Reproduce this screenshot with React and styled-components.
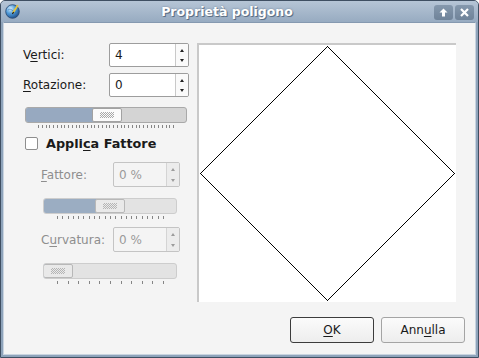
import React from 'react';
import styled, { createGlobalStyle } from 'styled-components';

const Global = createGlobalStyle`
  html, body { margin: 0; padding: 0; background: #ffffff; }
  body { font-family: "DejaVu Sans", "Bitstream Vera Sans", sans-serif; font-size: 12px; color: #1a1a1a; }
  * { box-sizing: border-box; }
`;

const Window = styled.div`
  width: 479px;
  height: 358px;
  display: flex;
  flex-direction: column;
  background: #8ea3ba;
  border: 1px solid #3f4f62;
  border-radius: 5px 5px 0 0;
  overflow: hidden;
`;

const TitleBar = styled.div`
  height: 21px;
  flex: none;
  display: flex;
  align-items: center;
  padding: 0 4px 0 4px;
  background: linear-gradient(#b6c5d6, #97abc1);
`;

const TitleText = styled.div`
  flex: 1;
  text-align: center;
  font-weight: bold;
  font-size: 12.5px;
  color: #ffffff;
  text-shadow: 1px 1px 0 #5d6f84, 0 0 2px #6a7d93;
`;

const TitleButtons = styled.div`
  display: flex;
  gap: 2px;
  padding-top: 1px;
`;

const TitleButton = styled.div`
  width: 19px;
  height: 15px;
  border-radius: 3px;
  background: linear-gradient(#8598ad, #6f8399);
  display: flex;
  align-items: center;
  justify-content: center;
`;

const Body = styled.div`
  flex: 1;
  margin: 0 2px 2px 2px;
  border: 1px solid #c9d4e0;
  border-top-color: #8599b0;
  background: #f4f4f4;
  padding: 20px 10px 11px 19px;
  display: flex;
  flex-direction: column;
`;

const Main = styled.div`
  display: flex;
  gap: 8px;
  margin-right: 9px;
`;

const LeftColumn = styled.div`
  width: 166px;
  display: flex;
  flex-direction: column;
`;

const FieldRow = styled.div`
  display: grid;
  grid-template-columns: ${p => p.$labelW}px auto;
  align-items: center;
  padding-left: ${p => p.$indent || 0}px;
  margin-top: ${p => p.$mt || 0}px;
`;

const Label = styled.span`
  font-size: 12px;
  color: ${p => (p.$disabled ? '#8e8e8e' : '#1a1a1a')};
  u { text-underline-offset: 2px; }
`;

const SpinBox = styled.div`
  display: flex;
  width: ${p => p.$w}px;
  height: ${p => p.$h}px;
  border: 1px solid ${p => (p.$disabled ? '#c4c4c4' : '#9d9d9d')};
  border-radius: 2px;
  background: ${p => (p.$disabled ? '#f4f4f4' : '#ffffff')};
  overflow: hidden;
`;

const SpinValue = styled.div`
  flex: 1;
  display: flex;
  align-items: center;
  padding-left: 5px;
  font-size: 12px;
  color: ${p => (p.$disabled ? '#9a9a9a' : '#1a1a1a')};
`;

const SpinArrows = styled.div`
  width: 13px;
  border-left: 1px solid ${p => (p.$disabled ? '#d4d4d4' : '#c9c9c9')};
  background: ${p => (p.$disabled ? '#ececec' : '#fafafa')};
  display: flex;
  flex-direction: column;
  align-items: center;
  justify-content: space-between;
  padding: 5px 0 4px 0;
`;

const Arrow = styled.div`
  width: 0;
  height: 0;
  border-left: 2.5px solid transparent;
  border-right: 2.5px solid transparent;
  ${p => (p.$down ? 'border-top' : 'border-bottom')}: 3px solid ${p => (p.$disabled ? '#9c9c9c' : '#202020')};
`;

const SliderWrap = styled.div`
  margin-top: ${p => p.$mt}px;
  margin-left: ${p => p.$ml}px;
  width: ${p => p.$w}px;
`;

const Groove = styled.div`
  position: relative;
  height: 16px;
  border: 1px solid ${p => (p.$disabled ? '#cdcdcd' : '#a9a9a9')};
  border-radius: 3px;
  background: ${p => (p.$disabled ? '#e3e3e3' : '#d4d4d4')};
  overflow: hidden;
`;

const Fill = styled.div`
  height: 100%;
  background: ${p => (p.$disabled ? '#9badc2' : '#97a9c0')};
`;

const Handle = styled.div`
  position: absolute;
  top: 0;
  bottom: 0;
  width: 30px;
  border: 1px solid ${p => (p.$disabled ? '#b8b8b8' : '#a2a2a2')};
  border-radius: 2px;
  background: ${p => (p.$disabled ? '#e9e9e9' : '#fafafa')};
  display: flex;
  align-items: center;
  justify-content: center;
`;

const Grip = styled.div`
  width: 14px;
  height: 6px;
  background: repeating-conic-gradient(${p => (p.$disabled ? '#b4b4b4' : '#a8a8a8')} 0 25%, transparent 0 50%) 0 0 / 2px 2px;
`;

const Ticks = styled.div`
  display: flex;
  justify-content: space-between;
  margin: 2px ${p => p.$pr}px 0 ${p => p.$pl}px;
  height: 3px;
`;

const Tick = styled.span`
  width: 1px;
  height: 3px;
  background: #858585;
`;

const CheckRow = styled.div`
  display: flex;
  align-items: center;
  margin-top: 9px;
  margin-left: 2px;
  height: 13px;
`;

const CheckBox = styled.div`
  width: 13px;
  height: 13px;
  border: 1px solid #8e8e8e;
  border-radius: 2px;
  background: #ffffff;
`;

const CheckLabel = styled.span`
  margin-left: 8px;
  font-weight: bold;
  font-size: 12.8px;
  color: #1a1a1a;
  u { text-underline-offset: 2px; }
`;

const Preview = styled.div`
  width: 259px;
  height: 259px;
  background: #ffffff;
  border-top: 2px solid #c9c9c9;
  border-left: 2px solid #c9c9c9;
`;

const ButtonRow = styled.div`
  display: flex;
  justify-content: flex-end;
  gap: 7px;
  margin-top: 15px;
`;

const Button = styled.button`
  width: 84px;
  height: 26px;
  border: 1px solid ${p => (p.$default ? '#3c3c3c' : '#a4a4a4')};
  border-radius: 3px;
  background: linear-gradient(#fbfbfb, #ededed);
  font-family: "DejaVu Sans", sans-serif;
  font-size: 12px;
  color: #1a1a1a;
  padding: 0;
  u { text-underline-offset: 2px; }
`;

function Spin({ value, w, h, disabled }) {
  return (
    <SpinBox $w={w} $h={h} $disabled={disabled}>
      <SpinValue $disabled={disabled}>{value}</SpinValue>
      <SpinArrows $disabled={disabled}>
        <Arrow $disabled={disabled} />
        <Arrow $down $disabled={disabled} />
      </SpinArrows>
    </SpinBox>
  );
}

function Slider({ mt, ml, w, handle, fill, ticks, pl, pr, disabled }) {
  return (
    <SliderWrap $mt={mt} $ml={ml} $w={w}>
      <Groove $disabled={disabled}>
        <Fill $disabled={disabled} style={{ width: fill }} />
        <Handle $disabled={disabled} style={{ left: handle }}>
          <Grip $disabled={disabled} />
        </Handle>
      </Groove>
      <Ticks $pl={pl} $pr={pr}>
        {Array.from({ length: ticks }, (_, i) => (
          <Tick key={i} />
        ))}
      </Ticks>
    </SliderWrap>
  );
}

function GlobeIcon() {
  return (
    <svg width="15" height="15" viewBox="0 0 15 15">
      <defs>
        <radialGradient id="gl" cx="0.35" cy="0.3" r="0.8">
          <stop offset="0" stopColor="#d6efff" />
          <stop offset="0.45" stopColor="#4f9ad8" />
          <stop offset="1" stopColor="#17437e" />
        </radialGradient>
      </defs>
      <circle cx="7.5" cy="7.5" r="6.8" fill="url(#gl)" stroke="#27466f" strokeWidth="0.8" />
      <path d="M3 6 Q5 4 7 6 T11 9" fill="none" stroke="#2f6aa8" strokeWidth="0.8" opacity="0.7" />
      <path d="M12.5 1.8 L8.2 8.6" stroke="#e8c53a" strokeWidth="1.8" strokeLinecap="round" />
      <path d="M8.6 8 L7.4 10" stroke="#1b1b1b" strokeWidth="1.2" />
    </svg>
  );
}

export default function App() {
  return (
    <>
      <Global />
      <Window>
        <TitleBar>
          <GlobeIcon />
          <TitleText>Proprietà poligono</TitleText>
          <TitleButtons>
            <TitleButton>
              <svg width="9" height="9" viewBox="0 0 9 9">
                <path d="M4.5 0.5 L8.5 4.5 L6 4.5 L6 8.5 L3 8.5 L3 4.5 L0.5 4.5 Z" fill="#ffffff" />
              </svg>
            </TitleButton>
            <TitleButton>
              <svg width="9" height="9" viewBox="0 0 9 9">
                <path d="M1 1 L8 8 M8 1 L1 8" stroke="#ffffff" strokeWidth="2.2" />
              </svg>
            </TitleButton>
          </TitleButtons>
        </TitleBar>
        <Body>
          <Main>
            <LeftColumn>
              <FieldRow $labelW={86}>
                <Label>V<u>e</u>rtici:</Label>
                <Spin value="4" w={80} h={24} />
              </FieldRow>
              <FieldRow $labelW={86} $mt={6}>
                <Label><u>R</u>otazione:</Label>
                <Spin value="0" w={80} h={24} />
              </FieldRow>
              <Slider mt={10} ml={2} w={162} handle={66} fill={80} ticks={37} pl={13} pr={13} />
              <CheckRow>
                <CheckBox />
                <CheckLabel>Appli<u>c</u>a Fattore</CheckLabel>
              </CheckRow>
              <FieldRow $labelW={72} $indent={18} $mt={12}>
                <Label $disabled><u>F</u>attore:</Label>
                <Spin value="0 %" w={67} h={25} disabled />
              </FieldRow>
              <Slider mt={11} ml={20} w={134} handle={51} fill={66} ticks={21} pl={14} pr={13} disabled />
              <FieldRow $labelW={72} $indent={18} $mt={8}>
                <Label $disabled>C<u>u</u>rvatura:</Label>
                <Spin value="0 %" w={67} h={25} disabled />
              </FieldRow>
              <Slider mt={11} ml={20} w={134} handle={-1} fill={15} ticks={11} pl={14} pr={13} disabled />
            </LeftColumn>
            <Preview>
              <svg width="257" height="257" viewBox="0 0 257 257" shapeRendering="crispEdges">
                <polygon points="128.5,1.5 255.5,128.5 128.5,255.5 1.5,128.5" fill="none" stroke="#000000" strokeWidth="1" />
              </svg>
            </Preview>
          </Main>
          <ButtonRow>
            <Button $default><u>O</u>K</Button>
            <Button>Ann<u>u</u>lla</Button>
          </ButtonRow>
        </Body>
      </Window>
    </>
  );
}
